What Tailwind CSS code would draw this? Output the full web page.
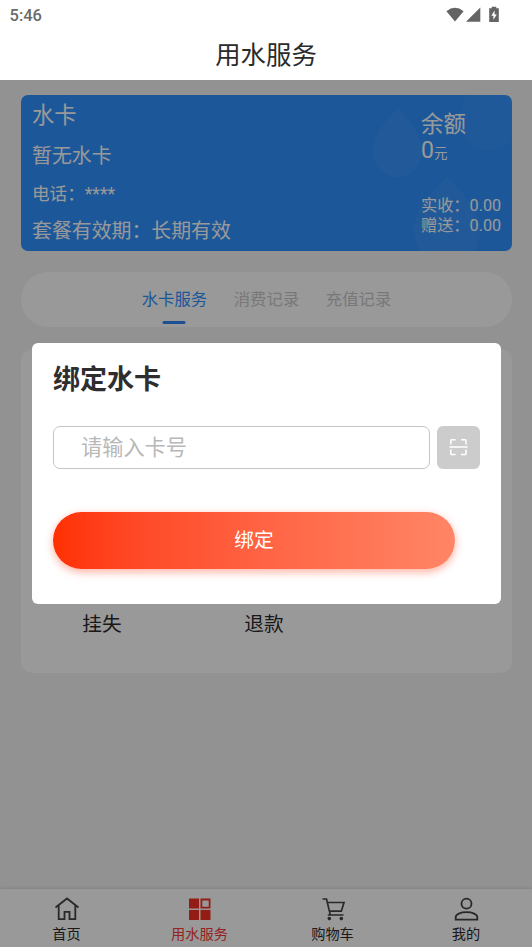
<!DOCTYPE html>
<html lang="zh-CN">
<head>
<meta charset="utf-8">
<meta name="viewport" content="width=device-width, initial-scale=1">
<title>用水服务</title>
<script src="https://cdn.jsdelivr.net/npm/@tailwindcss/browser@4"></script>
</head>
<body class="relative flex h-[947px] w-[532px] flex-col overflow-hidden bg-[#f4f4f4] font-[Roboto,'Noto_Sans_CJK_SC',sans-serif] text-[#333]">
  <header class="relative z-20 h-[80px] shrink-0 bg-white">
    <div class="flex h-[28px] items-center justify-between pt-[2px] pr-[33px] pl-[9.500px]">
      <span class="pt-[1px] text-[16.500px] leading-[27px] font-medium text-[#6a6a6a]">5:46</span>
      <div class="flex items-center text-[#646464]">
        <svg class="h-[16px] w-[18px]" viewBox="0 0 18 16" fill="currentColor"><path d="M.4 4.300Q9-2.600 17.600 4.300L9 14.600z"/></svg>
        <svg class="ml-[2px] h-[16px] w-[15px]" viewBox="0 0 15 16" fill="currentColor"><path d="M0 14.800 14.300.5v14.300z"/></svg>
        <svg class="ml-[8px] h-[18px] w-[10px]" viewBox="0 0 10 18" fill="currentColor"><path fill-rule="evenodd" d="M2.700.8h4.600v1.500h2.500v13.700H.2V2.300h2.500zM5.600 4.500 2.300 9.700H4.400v4L7.800 8.500H5.600z"/></svg>
      </div>
    </div>
    <h1 class="pt-[6px] text-center text-[25.400px] leading-[42px] text-[#2b2b2b]">用水服务</h1>
  </header>

  <main class="flex flex-1 flex-col px-[21px] pr-[20px] pt-[15px]">
    <section class="relative flex h-[156px] shrink-0 justify-between overflow-hidden rounded-[7px] bg-[#2e91ff] pr-[10px] pl-[11px] text-white">
      <svg class="absolute inset-0 h-[156px] w-[491px]" viewBox="0 0 491 156" fill="#fff" fill-opacity=".06">
        <path d="M377 13C368 22 352 39 352 56a24.500 26 0 0 0 49 0C401 39 385 22 377 13z"/>
        <path d="M426 82C415 94 393 113 393 135a32 34 0 0 0 66 0C459 113 437 94 426 82z"/>
        <path fill-opacity=".03" d="M444 0C432 29 443 55 467 55c14 0 22-6 24-12V0z"/>
      </svg>
      <div class="relative">
        <div class="h-[42px] text-[22.300px] leading-[40px]">水卡</div>
        <div class="h-[39px] text-[19.900px] leading-[40px]">暂无水卡</div>
        <div class="h-[36px] text-[17.600px] leading-[36px]">电话：****</div>
        <div class="h-[39px] text-[19.900px] leading-[40px]">套餐有效期：长期有效</div>
      </div>
      <div class="relative w-[81px] pt-[12px] whitespace-nowrap">
        <div class="h-[32px] pt-[1px] text-[22.500px] leading-[32px]">余额</div>
        <div class="h-[24px] text-[23px] leading-[23px]">0<span class="text-[13.500px]">元</span></div>
        <div class="mt-[33px] h-[20px] text-[16.200px] leading-[20px]">实收：0.00</div>
        <div class="h-[20px] text-[16.200px] leading-[20px]">赠送：0.00</div>
      </div>
    </section>

    <nav class="mt-[21px] flex h-[55px] shrink-0 justify-center gap-[26.500px] rounded-full bg-white text-[16.400px] leading-[56px] text-[#c8c8c8]">
      <div class="relative text-[#2e91ff]">水卡服务<span class="absolute bottom-[3px] left-1/2 h-[3px] w-[23px] -translate-x-1/2 rounded-full bg-[#2e85f4]"></span></div>
      <div>消费记录</div>
      <div>充值记录</div>
    </nav>

    <section class="mt-[22px] flex h-[324px] shrink-0 items-end rounded-[12px] bg-white text-center text-[19.700px] text-[#2b2b2b]">
      <div class="h-[64px] w-[162px] leading-[32px]">挂失</div>
      <div class="h-[64px] w-[162px] leading-[32px]">退款</div>
    </section>
  </main>

  <footer class="grid h-[58px] shrink-0 grid-cols-4 bg-white pt-[7px] text-center text-[14.200px] text-[#2b2b2b] shadow-[0_-1px_3px_rgba(0,0,0,0.12)]">
    <div class="flex flex-col items-center">
      <svg class="h-[26px] w-[26px]" viewBox="0 0 26 26" fill="none" stroke="#444" stroke-width="1.800"><path d="m1.500 11.500 11.500-9 11.500 9M4.700 9.500V23.200h5.800v-7.400h5v7.400h5.800V9.500"/></svg>
      <span class="leading-[24px]">首页</span>
    </div>
    <div class="flex flex-col items-center text-[#f53a36]">
      <svg class="h-[26px] w-[26px]" viewBox="0 0 26 26" fill="#f53024"><path d="M2 2.600h10v9.800H2zM2 14h10v10H2zM13.500 14h10v10h-10z"/><path d="M14.400 3.500h8.200v8.100h-8.200z" fill="none" stroke="#f53024" stroke-width="1.800"/></svg>
      <span class="leading-[24px]">用水服务</span>
    </div>
    <div class="flex flex-col items-center">
      <svg class="ml-[2px] h-[26px] w-[26px]" viewBox="0 0 26 26" fill="none" stroke="#444" stroke-width="1.700"><path d="M1.500 3h4l3.700 15.400M6.200 6.500h16.800L20.300 15.200H8.300M6.800 19h15.700"/><circle cx="8.300" cy="22.600" r="1.800" fill="#444" stroke="none"/><circle cx="20.300" cy="22.600" r="1.800" fill="#444" stroke="none"/></svg>
      <span class="leading-[24px]">购物车</span>
    </div>
    <div class="flex flex-col items-center">
      <svg class="ml-[2px] h-[26px] w-[26px]" viewBox="0 0 26 26" fill="none" stroke="#444" stroke-width="1.800"><circle cx="12.500" cy="7.700" r="5"/><path d="M1.700 23.600v-2.600c0-2.700 4.800-4.800 10.800-4.800s10.800 2.100 10.800 4.800v2.600z"/></svg>
      <span class="ml-[1px] leading-[24px]">我的</span>
    </div>
  </footer>

  <div class="absolute inset-x-0 top-[80px] bottom-0 z-10 bg-black/40">
    <div role="dialog" class="mt-[263px] ml-[32px] h-[261px] w-[469px] rounded-[6px] bg-white pt-[17px] pl-[21px]">
      <h2 class="text-[27px] leading-[40px] font-bold text-[#2e2e2e]">绑定水卡</h2>
      <div class="mt-[26px] flex gap-[7px]">
        <div class="h-[43px] w-[377px] rounded-[7px] border border-[#c4c4c4] pl-[27px] text-[21.200px] leading-[41px] text-[#b8b8b8]">请输入卡号</div>
        <div class="flex h-[43px] w-[43px] items-center justify-center rounded-[6px] bg-[#ccc]">
          <svg class="h-[19px] w-[19px]" viewBox="0 0 19 19" fill="none" stroke="#fff" stroke-width="1.500"><path d="M1.800 6.500V2.500q0-.8.800-.8h4M12 1.700h4.200q.8 0 .8.800v4M1.800 11.500v4.200q0 .8.800.8h4M12 16.500h4.200q.8 0 .8-.8v-4.200M.5 9h18"/></svg>
        </div>
      </div>
      <button class="mt-[43px] block h-[57px] w-[402px] rounded-full bg-linear-to-r from-[#ff3000] to-[#ff8566] text-[19.700px] leading-[53px] text-white shadow-[0_3px_8px_rgba(255,60,20,0.4)]">绑定</button>
    </div>
  </div>
</body>
</html>
